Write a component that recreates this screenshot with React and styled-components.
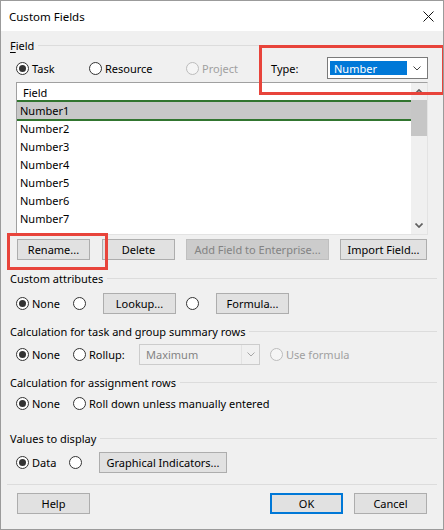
import React from "react";
import styled, { createGlobalStyle, css } from "styled-components";

const FONT = `"Noto Sans", "Open Sans", "Liberation Sans", sans-serif`;

const GlobalStyle = createGlobalStyle`
  html, body { margin: 0; padding: 0; background: #f0f0f0; }
  body { font-family: ${FONT}; font-size: 11px; color: #000; }
  * { box-sizing: border-box; }
`;

const Window = styled.div`
  width: 444px;
  height: 530px;
  border: 1px solid #9b9b9b;
  background: #f0f0f0;
  display: flex;
  flex-direction: column;
  overflow: hidden;
`;

const TitleBar = styled.div`
  height: 30px;
  flex: none;
  background: #ffffff;
  display: flex;
  align-items: center;
  justify-content: space-between;
  padding: 0 9px 0 8px;
`;

const Title = styled.span`
  font-size: 11.5px;
  color: #000;
`;

const Body = styled.div`
  display: flex;
  flex-direction: column;
  padding: 6px 6px 0 9px;
`;

const GroupHeader = styled.div`
  display: flex;
  align-items: center;
  height: 16px;
  margin-top: ${(p) => p.$mt || 0}px;
  white-space: nowrap;
  &::after {
    content: "";
    flex: 1;
    height: 1px;
    background: #dcdcdc;
    margin-left: 4px;
  }
`;

const Accel = styled.span`
  text-decoration: underline;
  text-underline-offset: 2px;
`;

const Row = styled.div`
  display: flex;
  align-items: center;
  height: ${(p) => p.$h || 21}px;
  margin-top: ${(p) => p.$mt || 0}px;
  padding-left: ${(p) => (p.$pl ?? 6)}px;
`;

const RadioOption = styled.label`
  display: flex;
  align-items: center;
  flex: none;
  white-space: nowrap;
  width: ${(p) => (p.$w ? `${p.$w}px` : "auto")};
  margin-left: ${(p) => p.$ml || 0}px;
  color: ${(p) => (p.$disabled ? "#a0a0a0" : "#000")};
`;

const RadioCircle = styled.span`
  width: 13px;
  height: 13px;
  flex: none;
  border-radius: 50%;
  border: 1px solid ${(p) => (p.$disabled ? "#bcbcbc" : "#333333")};
  background: ${(p) => (p.$disabled ? "#f5f5f5" : "#ffffff")};
  display: flex;
  align-items: center;
  justify-content: center;
  margin-right: 3px;
  &::after {
    content: "";
    width: 7px;
    height: 7px;
    border-radius: 50%;
    background: #333333;
    display: ${(p) => (p.$checked ? "block" : "none")};
  }
`;

function Radio({ checked, disabled, w, ml, children }) {
  return (
    <RadioOption $w={w} $ml={ml} $disabled={disabled}>
      <RadioCircle $checked={checked} $disabled={disabled} />
      {children}
    </RadioOption>
  );
}

const Button = styled.button`
  font: inherit;
  flex: none;
  height: 21px;
  width: ${(p) => p.$w}px;
  margin-left: ${(p) => p.$ml || 0}px;
  padding: 0;
  background: #e1e1e1;
  border: 1px solid #adadad;
  color: #000;
  white-space: nowrap;
  ${(p) =>
    p.$disabled &&
    css`
      background: #cccccc;
      border-color: #bfbfbf;
      color: #838383;
    `}
  ${(p) =>
    p.$default &&
    css`
      border: 2px solid #0078d7;
    `}
`;

/* red outline drawn around a highlighted control */
const Callout = styled.div`
  position: relative;
  display: flex;
  align-items: center;
  flex: none;
  &::after {
    content: "";
    position: absolute;
    left: ${(p) => p.$l}px;
    top: ${(p) => p.$t}px;
    width: ${(p) => p.$w}px;
    height: ${(p) => p.$h}px;
    border: 3px solid #e8443b;
    pointer-events: none;
  }
`;

const TypeLabel = styled.span`
  width: 56px;
  flex: none;
`;

const Select = styled.div`
  width: 101px;
  height: 22px;
  border: 1px solid #7a7a7a;
  background: #ffffff;
  display: flex;
  align-items: center;
  padding: 3px 0 3px 2px;
`;

const SelectValue = styled.span`
  width: 77px;
  height: 100%;
  background: #0078d7;
  color: #ffffff;
  display: flex;
  align-items: center;
  padding-left: 4px;
`;

const SelectArrow = styled.span`
  flex: 1;
  display: flex;
  align-items: center;
  justify-content: center;
`;

const ListBox = styled.div`
  margin: 3px 0 0 6px;
  width: 412px;
  height: 153px;
  border: 1px solid;
  border-color: #a0a0a0 #e3e3e3 #e3e3e3 #a0a0a0;
  background: #ffffff;
  display: flex;
`;

const ListBody = styled.div`
  flex: 1;
  overflow: hidden;
  display: flex;
  flex-direction: column;
`;

const ListHeader = styled.div`
  height: 17px;
  flex: none;
  margin-left: -1px;
  border-left: 1px solid #1a1a1a;
  padding: 2px 0 0 6px;
  display: flex;
  align-items: center;
`;

const ListRow = styled.div`
  height: 18px;
  flex: none;
  padding-left: 3px;
  display: flex;
  align-items: center;
  ${(p) =>
    p.$selected &&
    css`
      height: 21px;
      margin-bottom: -2px;
      background: #c8c8c8;
      border-top: 2px solid #31752f;
      border-bottom: 2px solid #31752f;
    `}
`;

const ScrollBar = styled.div`
  width: 16px;
  flex: none;
  background: #f0f0f0;
  display: flex;
  flex-direction: column;
`;

const ScrollArrow = styled.div`
  height: 17px;
  flex: none;
  display: flex;
  align-items: center;
  justify-content: center;
`;

const ScrollThumb = styled.div`
  height: 36px;
  flex: none;
  background: #c6c6c6;
`;

const ScrollTrack = styled.div`
  flex: 1;
`;

const Combo = styled.div`
  width: 121px;
  height: 21px;
  flex: none;
  border: 1px solid #cccccc;
  background: #f0f0f0;
  color: #838383;
  display: flex;
`;

const ComboText = styled.span`
  flex: 1;
  display: flex;
  align-items: center;
  padding-left: 6px;
  border-right: 1px solid #e2e2e2;
`;

const ComboArrow = styled.span`
  width: 17px;
  display: flex;
  align-items: center;
  justify-content: center;
`;

const Separator = styled.div`
  height: 1px;
  margin: 11px 0 0 -3px;
  background: #dcdcdc;
`;

const Footer = styled.div`
  display: flex;
  justify-content: space-between;
  align-items: center;
  margin-top: 8px;
  padding: 0 10px 0 7px;
`;

const FooterGroup = styled.div`
  display: flex;
  gap: 11px;
`;

const Chevron = ({ up, color = "#333", w = 8, h = 5, sw = 1 }) => (
  <svg width={w} height={h} viewBox={`0 0 ${w} ${h}`}>
    <path
      d={
        up
          ? `M0.5 ${h - 0.5} L${w / 2} 1 L${w - 0.5} ${h - 0.5}`
          : `M0.5 0.5 L${w / 2} ${h - 1} L${w - 0.5} 0.5`
      }
      fill="none"
      stroke={color}
      strokeWidth={sw}
    />
  </svg>
);

const CloseIcon = () => (
  <svg width="11" height="11" viewBox="0 0 11 11">
    <path d="M0.5 0.5 L10.5 10.5 M10.5 0.5 L0.5 10.5" stroke="#111" strokeWidth="1" fill="none" />
  </svg>
);

const fields = ["Number1", "Number2", "Number3", "Number4", "Number5", "Number6", "Number7", "Number8", "Number9"];

export default function App() {
  return (
    <>
      <GlobalStyle />
      <Window>
        <TitleBar>
          <Title>Custom Fields</Title>
          <CloseIcon />
        </TitleBar>
        <Body>
          <GroupHeader $mt={0}>
            <span>
              <Accel>F</Accel>ield
            </span>
          </GroupHeader>
          <Row $mt={4} $h={22}>
            <Radio checked w={73}>Task</Radio>
            <Radio w={97}>Resource</Radio>
            <Radio disabled w={85}>Project</Radio>
            <Callout $l={-12} $t={-12} $w={180} $h={44}>
              <TypeLabel>Type:</TypeLabel>
              <Select>
                <SelectValue>Number</SelectValue>
                <SelectArrow>
                  <Chevron color="#444" />
                </SelectArrow>
              </Select>
            </Callout>
          </Row>

          <ListBox>
            <ListBody>
              <ListHeader>Field</ListHeader>
              {fields.map((f, i) => (
                <ListRow key={f} $selected={i === 0}>
                  {f}
                </ListRow>
              ))}
            </ListBody>
            <ScrollBar>
              <ScrollArrow>
                <Chevron up color="#606060" sw={1.7} />
              </ScrollArrow>
              <ScrollThumb />
              <ScrollTrack />
              <ScrollArrow>
                <Chevron color="#606060" sw={1.7} />
              </ScrollArrow>
            </ScrollBar>
          </ListBox>

          <Row $mt={4} $pl={7}>
            <Callout $l={-10} $t={-6} $w={95} $h={31}>
              <Button $w={73}>Rename...</Button>
            </Callout>
            <Button $w={73} $ml={12}>Delete</Button>
            <Button $w={143} $ml={11} $disabled>
              Add Field to Enterprise...
            </Button>
            <Button $w={87} $ml={11}>Import Field...</Button>
          </Row>

          <GroupHeader $mt={10}>Custom attributes</GroupHeader>
          <Row $mt={7}>
            <Radio checked w={57}>None</Radio>
            <Radio w={30} />
            <Button $w={73}>Lookup...</Button>
            <Radio w={30} ml={10} />
            <Button $w={73}>Formula...</Button>
          </Row>

          <GroupHeader $mt={9}>Calculation for task and group summary rows</GroupHeader>
          <Row $mt={5}>
            <Radio checked w={57}>None</Radio>
            <Radio w={66}>Rollup:</Radio>
            <Combo>
              <ComboText>Maximum</ComboText>
              <ComboArrow>
                <Chevron color="#a6a6a6" />
              </ComboArrow>
            </Combo>
            <Radio disabled ml={10}>Use formula</Radio>
          </Row>

          <GroupHeader $mt={9}>Calculation for assignment rows</GroupHeader>
          <Row $mt={3}>
            <Radio checked w={57}>None</Radio>
            <Radio>Roll down unless manually entered</Radio>
          </Row>

          <GroupHeader $mt={16}>Values to display</GroupHeader>
          <Row $mt={6}>
            <Radio checked w={53}>Data</Radio>
            <Radio w={30} />
            <Button $w={128}>Graphical Indicators...</Button>
          </Row>

          <Separator />

          <Footer>
            <Button $w={73}>Help</Button>
            <FooterGroup>
              <Button $w={73} $default>OK</Button>
              <Button $w={73}>Cancel</Button>
            </FooterGroup>
          </Footer>
        </Body>
      </Window>
    </>
  );
}
